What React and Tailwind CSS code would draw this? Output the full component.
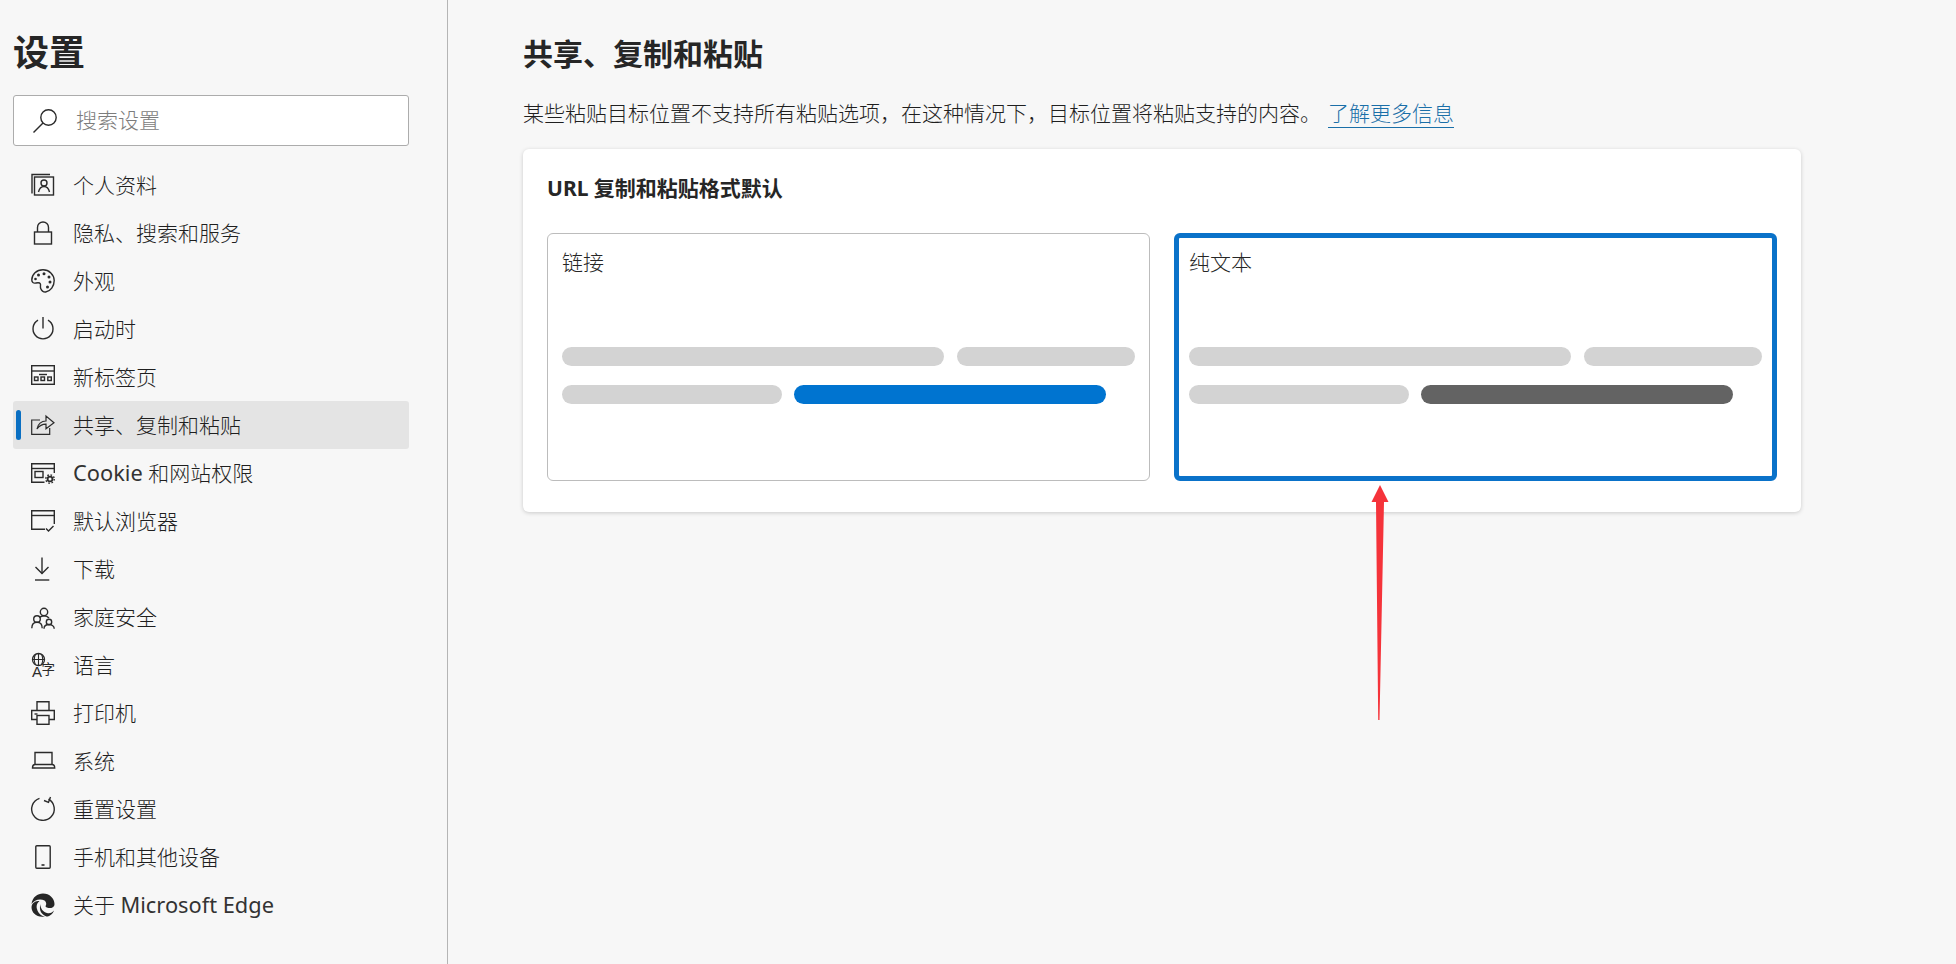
import React from "react";

const S = ({ children }) => (
  <svg width="24" height="24" viewBox="0 0 24 24" fill="none" stroke="#2b2b2b" strokeWidth="1.4" className="shrink-0 overflow-visible">
    {children}
  </svg>
);

const icons = {
  profile: (
    <S>
      <path d="M1 20.500V1.500H19" />
      <rect x="3.500" y="4" width="19" height="18" />
      <circle cx="13" cy="10" r="3" />
      <path d="M7.500 19c.8-3.500 2.800-5.500 5.500-5.500s4.700 2 5.500 5.500" />
    </S>
  ),
  lock: (
    <S>
      <rect x="3.500" y="11" width="17" height="12" />
      <path d="M6.500 11V6.500a5.500 5.500 0 0 1 11 0V11" />
    </S>
  ),
  palette: (
    <S>
      <path d="M12 .8C5.500.8.800 5.500.800 11c0 2.200 1.700 3.400 3.500 3.100 2.200-.4 4.200-1 5 .6.700 1.400-.4 2.700.4 4.800.8 2 2.700 3.700 5 3.500 4.800-.6 8.500-5.700 8.500-11.500C23.200 5.500 18 .8 12 .8z" />
      <g fill="#2b2b2b" stroke="none">
        <circle cx="7.500" cy="6" r="1.500" /><circle cx="13" cy="4.800" r="1.500" />
        <circle cx="18" cy="8" r="1.500" /><circle cx="19" cy="13" r="1.500" />
        <circle cx="16.500" cy="18" r="1.500" /><circle cx="4.500" cy="10" r="1.300" />
      </g>
    </S>
  ),
  power: (
    <S>
      <path d="M7 3.200a10 10 0 1 0 10 0" />
      <path d="M12 0v11.500" />
    </S>
  ),
  newtab: (
    <S>
      <rect x=".7" y=".7" width="22.600" height="18.600" />
      <path d="M.7 6h22.600" />
      <path d="M8 9.500h8" />
      <rect x="3.500" y="12" width="3.500" height="3.500" /><rect x="10" y="12" width="3.500" height="3.500" /><rect x="16.800" y="12" width="3.500" height="3.500" />
    </S>
  ),
  share: (
    <S>
      <path d="M9 7H.7v14.300h18V15" strokeWidth="1.200" />
      <path d="M6 16c.6-5 4.500-8 9-8V3l8 6.800-8 6v-4.600c-4 0-6.500 1.300-9 4.800z" strokeWidth="1.200" />
    </S>
  ),
  cookie: (
    <S>
      <path d="M23.300 12V2.700H.7v18.600h12.800" />
      <path d="M.7 7.500h22.600" />
      <rect x="4" y="10.500" width="8" height="6" />
      <circle cx="19" cy="18" r="2.400" strokeWidth="1.800" />
      <circle cx="19" cy="18" r="4.200" strokeWidth="1.400" strokeDasharray="1.600 1.700" />
    </S>
  ),
  browser: (
    <S>
      <path d="M14 20.300H.7V1.700h22.600V15" />
      <path d="M.7 6.500h22.600" />
      <path d="M15 19.500l2.500 2.500 5-5" />
    </S>
  ),
  download: (
    <S>
      <path d="M11 .5v16" /><path d="M4.500 10l6.500 6.500 6.500-6.500" /><path d="M4 23h14.300" />
    </S>
  ),
  family: (
    <S>
      <circle cx="13" cy="7" r="3.700" />
      <circle cx="6" cy="14" r="3.300" />
      <circle cx="18" cy="17" r="2.700" />
      <path d="M8.500 12.500c1-1 2.800-1.800 4.500-1.800 2 0 3.800.8 5 2.300" />
      <path d="M.8 23.300c0-3.500 2-6 5.200-6s5.200 2.500 5.200 6" />
      <path d="M13 23.800c0-2.500 2-4.300 5-4.300s5.200 1.800 5.200 4.300" />
    </S>
  ),
  lang: (
    <S>
      <circle cx="7.500" cy="6.500" r="6" strokeWidth="1.300" />
      <path d="M1.500 6.500h12M7.500 .5v12M4.300 1.500c-1.200 3-1.200 7 0 10M10.700 1.500c1.200 3 1.200 7 0 10" strokeWidth="1.100" />
      <text x="1" y="23.500" fill="#2b2b2b" stroke="none" fontSize="15" fontFamily="'Liberation Sans', sans-serif">A</text>
      <text x="10.500" y="21" fill="#2b2b2b" stroke="none" fontSize="13.500" fontFamily="'Noto Sans CJK SC', sans-serif">字</text>
    </S>
  ),
  printer: (
    <S>
      <path d="M6 9.500V.7h12v8.800" />
      <path d="M6 18.500H.7V9.500h22.600v9H18" />
      <rect x="6" y="14.500" width="12" height="8.800" />
      <path d="M3.500 13h3" />
    </S>
  ),
  laptop: (
    <S>
      <path d="M4 15V3.500h17V15" />
      <path d="M1.500 19c0-2 .7-3.500 2.500-3.500h17c1.800 0 2.700 1.500 2.700 3.500z" />
    </S>
  ),
  reset: (
    <S>
      <path d="M8.500 1.300A11.300 11.300 0 1 0 17.500 2.200" />
      <path d="M19.500 0L17.500 5.300L13 3.500" />
    </S>
  ),
  phone: (
    <S>
      <rect x="4.800" y=".7" width="14.400" height="22.600" rx="1" />
      <path d="M10.500 20h3" strokeWidth="1.600" />
    </S>
  ),
  edge: (
    <svg width="24" height="24" viewBox="0 0 24 24" fill="#262626" className="shrink-0">
      <path d="M.5 11C1.500 4 6.500.5 12 .5 18.500.5 23.500 5.500 23.500 11c0 3.500-3.500 4.500-6 4-2.500-.5-3.500-1.500-2.700-2.500.7-1 .7-3.500-1.300-5C9 5 3 7 .5 11z" />
      <path d="M.5 14C1 9 5 8 8.500 8 6 10 5 13 6 16c1 4 4 7 8 7.500C6 25 .5 20 .5 14z" />
      <path d="M9.500 11C9 15 12 19 16 20c3 .7 5.500-.5 7-2.500-1.500 4-5 6-7.500 6-4.500-1.500-8-6-6-12.500z" />
    </svg>
  ),
};

const L = ({ children }) => <span className="text-[21.8px] font-normal text-[#333333]">{children}</span>;

const items = [
  ["profile", "个人资料"],
  ["lock", "隐私、搜索和服务"],
  ["palette", "外观"],
  ["power", "启动时"],
  ["newtab", "新标签页"],
  ["share", "共享、复制和粘贴", true],
  ["cookie", <><L>Cookie</L> 和网站权限</>],
  ["browser", "默认浏览器"],
  ["download", "下载"],
  ["family", "家庭安全"],
  ["lang", "语言"],
  ["printer", "打印机"],
  ["laptop", "系统"],
  ["reset", "重置设置"],
  ["phone", "手机和其他设备"],
  ["edge", <>关于 <L>Microsoft Edge</L></>],
];

const Bars = ({ color }) => (
  <div className="flex flex-col gap-[19px] mt-[71px]">
    <div className="flex gap-[13px]">
      <div className="w-[382px] h-[19px] rounded-[10px] bg-[#d3d3d3]" />
      <div className="w-[178px] h-[19px] rounded-[10px] bg-[#d3d3d3]" />
    </div>
    <div className="flex gap-[12px]">
      <div className="w-[220px] h-[19px] rounded-[10px] bg-[#d3d3d3]" />
      <div className={`w-[312px] h-[19px] rounded-[10px] ${color}`} />
    </div>
  </div>
);

export default function App() {
  return (
    <div className="relative flex h-[964px] w-[1956px] overflow-hidden bg-[#f7f7f7] text-[#262626] font-['Noto_Sans','Noto_Sans_CJK_SC',sans-serif]">
      <aside className="w-[448px] shrink-0 border-r border-[#b5b5b5] pl-[13px] pr-[38px] pt-[29px]">
        <h1 className="text-[36px] leading-[48px] font-bold text-[#262626]">设置</h1>
        <div className="mt-[18px] flex h-[51px] items-center rounded-[3px] border border-[#acacac] bg-white pl-[19px]">
          <svg width="24" height="24" viewBox="0 0 24 24" fill="none" stroke="#2b2b2b" strokeWidth="1.400" className="shrink-0">
            <circle cx="15.500" cy="8.500" r="7.700" />
            <path d="M10 14L.5 23.500" />
          </svg>
          <span className="ml-[19px] pb-[2px] text-[21px] leading-[28px] font-light text-[#7c7c7c]">搜索设置</span>
        </div>
        <nav className="mt-[15px] flex flex-col">
          {items.map(([icon, label, active]) => (
            <div key={icon} className={`relative flex h-[48px] items-center gap-[18px] rounded-[3px] pl-[18px] ${active ? "bg-[#e4e4e4]" : ""}`}>
              {active && <span className="absolute left-[3px] top-[9px] h-[30px] w-[5px] rounded-full bg-[#0a6fc2]" />}
              {icons[icon]}
              <span className="text-[21px] leading-[28px] font-light whitespace-nowrap text-[#1f1f1f]">{label}</span>
            </div>
          ))}
        </nav>
      </aside>

      <main className="pl-[75px] pt-[32px]">
        <h2 className="text-[30px] leading-[44px] font-bold text-[#262626]">共享、复制和粘贴</h2>
        <p className="mt-[23px] flex items-start text-[21px] leading-[28px] font-light text-[#1f1f1f] whitespace-nowrap">
          某些粘贴目标位置不支持所有粘贴选项，在这种情况下，目标位置将粘贴支持的内容。
          <a className="ml-[7px] text-[#1a6fa8] border-b border-[#1a6fa8] h-[29px]">了解更多信息</a>
        </p>
        <section className="mt-[21px] h-[363px] w-[1278px] rounded-[6px] bg-white pl-[24px] pr-[25px] pt-[24px] shadow-[0_1px_4px_rgba(0,0,0,0.18)]">
          <h3 className="text-[21px] leading-[30px] font-bold text-[#262626]">URL 复制和粘贴格式默认</h3>
          <div className="mt-[30px] flex gap-[24px]">
            <div className="h-[248px] w-[604px] rounded-[6px] border border-[#bcbcbc] px-[14px] pt-[14px]">
              <div className="text-[21px] leading-[28px] font-light">链接</div>
              <Bars color="bg-[#0074d0]" />
            </div>
            <div className="h-[248px] w-[603px] rounded-[6px] border-[5px] border-[#0a72c9] px-[10px] pt-[10px]">
              <div className="text-[21px] leading-[28px] font-light">纯文本</div>
              <Bars color="bg-[#636363]" />
            </div>
          </div>
        </section>
      </main>

      <svg className="absolute left-[1368px] top-[483px]" width="24" height="240" viewBox="0 0 24 240">
        <path d="M12 2L20.500 19H16L11.500 237 10.200 237 8 19H3.500z" fill="#f5333a" />
      </svg>
    </div>
  );
}
